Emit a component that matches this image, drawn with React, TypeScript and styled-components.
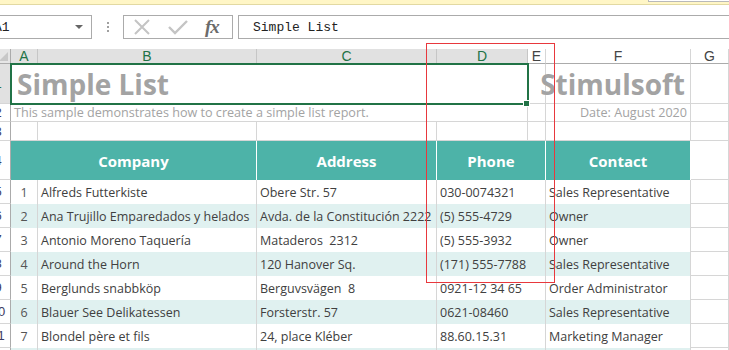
import React from 'react';
import styled, { createGlobalStyle } from 'styled-components';

const GlobalStyle = createGlobalStyle`
    body {
        margin: 0;
        background: #ffffff;
        overflow: hidden;
    }
`;

const Frame = styled.div`
    position: relative;
    width: 729px;
    height: 350px;
    overflow: hidden;
    background: #ffffff;
`;

// the screenshot is a crop: the window's left edge sits 14px off screen
const Shifted = styled.div`
    margin-left: -14px;
    width: 743px;
`;

const TopStrip = styled.div`
    height: 4px;
    background: #fff6c6;
    border-bottom: 1px solid #e2d9a2;
    display: flex;
    justify-content: flex-end;
`;

const SearchStub = styled.div`
    width: 80px;
    height: 1px;
    background: #ffffff;
    border-left: 1px solid #b9b9b9;
    border-bottom: 1px solid #b9b9b9;
`;

const FormulaBar = styled.div`
    margin-top: 10px;
    height: 24px;
    display: flex;
    align-items: stretch;
`;

const NameBox = styled.div`
    width: 106px;
    box-sizing: border-box;
    border: 1px solid #ababab;
    display: flex;
    align-items: center;
    justify-content: space-between;
    padding: 0 8px 0 7px;
    font-family: "Liberation Mono", monospace;
    font-size: 13px;
    color: #222;
`;

const DropArrow = styled.span`
    width: 0;
    height: 0;
    border-left: 4px solid transparent;
    border-right: 4px solid transparent;
    border-top: 4px solid #666;
`;

const Grip = styled.div`
    width: 31px;
    display: flex;
    align-items: center;
    justify-content: center;
`;

const FxBox = styled.div`
    width: 110px;
    box-sizing: border-box;
    border: 1px solid #ababab;
    display: flex;
    align-items: center;
    gap: 17px;
    padding-left: 9px;
`;

const FxLabel = styled.span`
    font-family: "Liberation Serif", serif;
    font-style: italic;
    font-weight: bold;
    font-size: 19px;
    color: #6b6b6b;
    letter-spacing: -1px;
`;

const FormulaInput = styled.div`
    flex: 1;
    margin-left: 5px;
    box-sizing: border-box;
    border: 1px solid #ababab;
    border-right: none;
    display: flex;
    align-items: center;
    padding-left: 14px;
    font-family: "Liberation Mono", monospace;
    font-size: 13px;
    color: #222;
`;

const Sheet = styled.div`
    margin-top: 10px;
    display: grid;
    grid-template-columns: 25px 27px 219px 180px 91px 18px 145px 1fr;
    grid-template-rows: 15px 40px 18px 19px 39px repeat(8, 24px);
`;

const Corner = styled.div`
    background: #e6e6e6;
    border-right: 1px solid #ababab;
    border-bottom: 1px solid #ababab;
    box-sizing: border-box;
    position: relative;
    &::after {
        content: '';
        position: absolute;
        right: 2px;
        bottom: 2px;
        border-left: 9px solid transparent;
        border-bottom: 9px solid #c8c8c8;
    }
`;

const ColHead = styled.div<{ $sel?: boolean }>`
    box-sizing: border-box;
    background: ${p => (p.$sel ? '#e1e1e1' : '#ffffff')};
    color: ${p => (p.$sel ? '#217346' : '#444444')};
    border-right: 1px solid ${p => (p.$sel ? '#c6c6c6' : '#d6d6d6')};
    border-bottom: 1px solid #ababab;
    font-family: "Liberation Sans", Arial, sans-serif;
    font-size: 14px;
    line-height: 15px;
    text-align: center;
    overflow: hidden;
`;

const RowHead = styled.div<{ $sel?: boolean }>`
    box-sizing: border-box;
    background: ${p => (p.$sel ? '#e1e1e1' : '#ffffff')};
    color: ${p => (p.$sel ? '#217346' : '#3c3c64')};
    border-right: 1px solid #ababab;
    border-bottom: 1px solid #d6d6d6;
    font-family: "Liberation Sans", Arial, sans-serif;
    font-size: 13px;
    display: flex;
    align-items: center;
    justify-content: center;
`;

const Cell = styled.div<{ $span?: number; $band?: boolean; $line?: boolean }>`
    grid-column: span ${p => p.$span ?? 1};
    box-sizing: border-box;
    background: ${p => (p.$band ? '#e0f1f0' : '#ffffff')};
    border-right: 1px solid #d6d6d6;
    border-bottom: ${p => (p.$line ? '1px solid #d6d6d6' : 'none')};
    font-family: "Open Sans", "Noto Sans", sans-serif;
    font-size: 12.5px;
    color: #404040;
    display: flex;
    align-items: center;
    padding-left: 3px;
    white-space: pre;
`;

const NumCell = styled(Cell)`
    justify-content: center;
    padding-left: 0;
    color: #555555;
`;

const TitleCell = styled(Cell)`
    position: relative;
    z-index: 1;
    outline: 2px solid #217346;
    outline-offset: -1px;
    font-size: 28px;
    font-weight: bold;
    color: #a3a3a3;
    padding-left: 6px;
`;

const FillHandle = styled.span`
    position: absolute;
    right: -3px;
    bottom: -3px;
    width: 5px;
    height: 5px;
    background: #217346;
    border: 1px solid #ffffff;
`;

const BrandCell = styled(Cell)`
    justify-content: flex-end;
    padding-right: 5px;
    font-size: 28px;
    font-weight: bold;
    color: #a3a3a3;
`;

const NoteCell = styled(Cell)<{ $right?: boolean }>`
    justify-content: ${p => (p.$right ? 'flex-end' : 'flex-start')};
    padding-right: ${p => (p.$right ? '3px' : '0')};
    font-size: 12.6px;
    color: #a3a3a3;
`;

const HeadCell = styled.div<{ $span?: number }>`
    grid-column: span ${p => p.$span ?? 1};
    box-sizing: border-box;
    background: #4db3a8;
    border-right: 1px solid #ffffff;
    color: #ffffff;
    font-family: "Open Sans", "Noto Sans", sans-serif;
    font-weight: bold;
    font-size: 15px;
    display: flex;
    align-items: center;
    justify-content: center;
`;

const RedBox = styled.div`
    position: absolute;
    left: 426px;
    top: 43px;
    width: 129px;
    height: 240px;
    box-sizing: border-box;
    border: 1px solid #e8383d;
    pointer-events: none;
    z-index: 2;
`;

const columns = ['A', 'B', 'C', 'D', 'E', 'F', 'G'];

const rows = [
    ['Alfreds Futterkiste', 'Obere Str. 57', '030-0074321', 'Sales Representative'],
    ['Ana Trujillo Emparedados y helados', 'Avda. de la Constitución 2222', '(5) 555-4729', 'Owner'],
    ['Antonio Moreno Taquería', 'Mataderos  2312', '(5) 555-3932', 'Owner'],
    ['Around the Horn', '120 Hanover Sq.', '(171) 555-7788', 'Sales Representative'],
    ['Berglunds snabbköp', 'Berguvsvägen  8', '0921-12 34 65', 'Order Administrator'],
    ['Blauer See Delikatessen', 'Forsterstr. 57', '0621-08460', 'Sales Representative'],
    ['Blondel père et fils', '24, place Kléber', '88.60.15.31', 'Marketing Manager'],
];

function App() {
    return (
        <Frame>
            <GlobalStyle />
            <Shifted>
                <TopStrip>
                    <SearchStub />
                </TopStrip>
                <FormulaBar>
                    <NameBox>
                        A1
                        <DropArrow />
                    </NameBox>
                    <Grip>
                        <svg width="3" height="11" viewBox="0 0 3 11">
                            <rect x="1" y="0" width="2" height="2" fill="#a0a0a0" />
                            <rect x="1" y="4" width="2" height="2" fill="#a0a0a0" />
                            <rect x="1" y="8" width="2" height="2" fill="#a0a0a0" />
                        </svg>
                    </Grip>
                    <FxBox>
                        <svg width="18" height="16" viewBox="0 0 18 16">
                            <path d="M2 1 L16 15 M16 1 L2 15" stroke="#c4c4c4" strokeWidth="2" fill="none" />
                        </svg>
                        <svg width="20" height="16" viewBox="0 0 20 16">
                            <path d="M1 8 L7 14 L19 2" stroke="#c4c4c4" strokeWidth="2.4" fill="none" />
                        </svg>
                        <FxLabel>fx</FxLabel>
                    </FxBox>
                    <FormulaInput>Simple List</FormulaInput>
                </FormulaBar>

                <Sheet>
                    <Corner />
                    {columns.map((c, i) => (
                        <ColHead key={c} $sel={i < 4}>{c}</ColHead>
                    ))}

                    <RowHead $sel>1</RowHead>
                    <TitleCell $span={4}>
                        Simple List
                        <FillHandle />
                    </TitleCell>
                    <Cell $line />
                    <BrandCell $line>Stimulsoft</BrandCell>
                    <Cell $line />

                    <RowHead>2</RowHead>
                    <NoteCell $span={4} $line>This sample demonstrates how to create a simple list report.</NoteCell>
                    <Cell $line />
                    <NoteCell $right $line>Date: August 2020</NoteCell>
                    <Cell $line />

                    <RowHead>3</RowHead>
                    {columns.map(c => (
                        <Cell key={c} $line />
                    ))}

                    <RowHead>4</RowHead>
                    <HeadCell $span={2}>Company</HeadCell>
                    <HeadCell>Address</HeadCell>
                    <HeadCell $span={2}>Phone</HeadCell>
                    <HeadCell>Contact</HeadCell>
                    <Cell $line />

                    {rows.map((r, i) => {
                        const band = i % 2 === 1;
                        return (
                            <React.Fragment key={r[0]}>
                                <RowHead>{i + 5}</RowHead>
                                <NumCell $band={band}>{i + 1}</NumCell>
                                <Cell $band={band}>{r[0]}</Cell>
                                <Cell $band={band}>{r[1]}</Cell>
                                <Cell $band={band} $span={2}>{r[2]}</Cell>
                                <Cell $band={band}>{r[3]}</Cell>
                                <Cell $line />
                            </React.Fragment>
                        );
                    })}

                    <RowHead>12</RowHead>
                    <NumCell $band />
                    <Cell $band />
                    <Cell $band />
                    <Cell $band $span={2} />
                    <Cell $band />
                    <Cell $line />
                </Sheet>
            </Shifted>
            <RedBox />
        </Frame>
    );
}

export default App;
